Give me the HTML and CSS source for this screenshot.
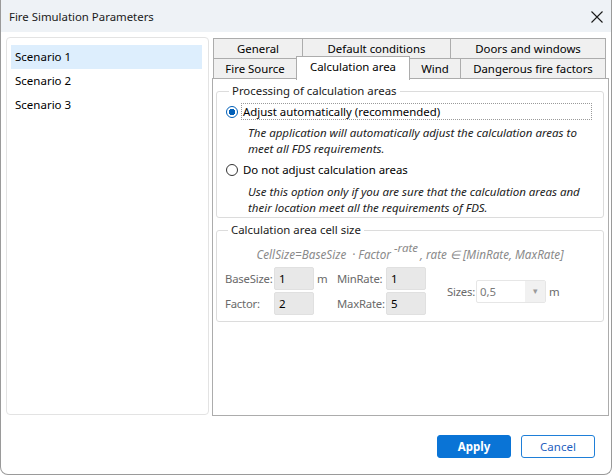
FILE: index.html
```html
<!DOCTYPE html>
<html>
<head>
<meta charset="utf-8">
<link rel="stylesheet" href="styles.css">
</head>
<body>
<div class="dialog">
  <div class="titlebar">
    <span class="title">Fire Simulation Parameters</span>
    <svg class="close" width="12" height="12" viewBox="0 0 12 12"><path d="M0.5 0.5 L11.5 11.5 M11.5 0.5 L0.5 11.5" stroke="#1a1a1a" stroke-width="1.1" fill="none"/></svg>
  </div>
  <div class="main">
    <ul class="scenarios">
      <li class="sel">Scenario 1</li>
      <li>Scenario 2</li>
      <li>Scenario 3</li>
    </ul>
    <div class="tabctl">
      <div class="tabrow">
        <div class="tab t-gen">General</div>
        <div class="tab t-def">Default conditions</div>
        <div class="tab t-door">Doors and windows</div>
      </div>
      <div class="tabrow row2">
        <div class="tab t-fire">Fire Source</div>
        <div class="tab t-calc active">Calculation area</div>
        <div class="tab t-wind">Wind</div>
        <div class="tab t-dang">Dangerous fire factors</div>
      </div>
      <div class="panel">
        <fieldset class="group g1">
          <legend>Processing of calculation areas</legend>
          <div class="radio-row">
            <span class="radio checked"></span>
            <span class="radio-label focus">Adjust automatically (recommended)</span>
          </div>
          <p class="desc">The application will automatically adjust the calculation areas to meet all FDS requirements.</p>
          <div class="radio-row r2">
            <span class="radio"></span>
            <span class="radio-label">Do not adjust calculation areas</span>
          </div>
          <p class="desc d2">Use this option only if you are sure that the calculation areas and their location meet all the requirements of FDS.</p>
        </fieldset>
        <fieldset class="group g2">
          <legend>Calculation area cell size</legend>
          <div class="formula">CellSize=BaseSize &nbsp;· Factor <sup>-rate</sup>, rate ∈ [MinRate, MaxRate]</div>
          <div class="cellgrid">
            <span class="lbl">BaseSize:</span>
            <span class="inp">1</span>
            <span class="unit">m</span>
            <span class="lbl">MinRate:</span>
            <span class="inp">1</span>
            <span></span>
            <div class="sizes">
              <span class="lbl">Sizes:</span>
              <span class="combo"><span class="combo-val">0,5</span><span class="combo-arrow">▾</span></span>
              <span class="unit u2">m</span>
            </div>
            <span class="lbl">Factor:</span>
            <span class="inp">2</span>
            <span></span>
            <span class="lbl">MaxRate:</span>
            <span class="inp">5</span>
            <span></span>
          </div>
        </fieldset>
      </div>
    </div>
  </div>
  <div class="buttons">
    <button class="btn primary">Apply</button>
    <button class="btn secondary">Cancel</button>
  </div>
</div>
</body>
</html>
```

FILE: styles.css
```css
html, body {
  margin: 0;
  padding: 0;
  background: #ffffff;
}
body {
  font-family: "Noto Sans", "Open Sans", sans-serif;
  font-size: 11.3px;
  color: #000;
}
.dialog {
  box-sizing: border-box;
  width: 612px;
  height: 475px;
  border: 1px solid #9a9a9a;
  border-top: none;
  border-radius: 0 0 8px 8px;
  background: #fff;
  overflow: hidden;
}
.titlebar {
  height: 32px;
  background: #eef2f6;
  display: flex;
  align-items: center;
  justify-content: space-between;
  padding: 0 8px 0 8px;
}
.title {
  font-size: 11.4px;
  color: #1a1a1a;
}
.close {
  display: block;
  margin-top: 1px;
}
.main {
  display: flex;
  padding: 5px 0 0 5px;
}
.scenarios {
  list-style: none;
  margin: 0;
  box-sizing: border-box;
  width: 203px;
  height: 378px;
  border: 1px solid #e3e3e3;
  border-radius: 4px;
  padding: 7px 6px 0 4px;
}
.scenarios li {
  height: 24px;
  line-height: 24px;
  padding-left: 4px;
  font-size: 11.5px;
}
.scenarios li.sel {
  background: #ddeefd;
}
.tabctl {
  margin-left: 3px;
  margin-top: 1px;
  width: 397px;
}
.tabrow {
  display: flex;
  height: 21px;
  margin-left: 1px;
}
.row2 {
  margin-top: -1px;
}
.tab {
  box-sizing: border-box;
  height: 21px;
  border: 1px solid #acacac;
  background: #f0f0f0;
  text-align: center;
  line-height: 19px;
  font-size: 11.4px;
  margin-left: -1px;
  white-space: nowrap;
}
.tab:first-child {
  margin-left: 0;
}
.t-gen { width: 90px; }
.t-def { width: 149px; }
.t-door { width: 156px; }
.t-fire { width: 84px; }
.t-calc { width: 114px; }
.t-wind { width: 52px; }
.t-dang { width: 146px; }
.tab.active {
  background: #fff;
  height: 24px;
  margin-top: -2px;
  border-bottom: none;
  line-height: 19px;
  position: relative;
  z-index: 1;
}
.panel {
  box-sizing: border-box;
  margin-top: -1px;
  height: 338px;
  border: 1px solid #acacac;
  background: #fff;
  padding: 0 4px 0 3px;
}
.group {
  margin: 5px 0 0 0;
  padding: 0;
  border: 1px solid #dcdcdc;
  border-radius: 3px;
  min-width: 0;
}
.group legend {
  margin-left: 3px;
  padding: 0 3px;
  line-height: 14px;
  font-size: 11.4px;
  color: #1a1a1a;
}
.g1 {
  padding: 5px 11px 1px 9px;
}
.radio-row {
  display: flex;
  align-items: center;
  height: 17px;
}
.r2 {
  margin-top: 4px;
}
.radio {
  box-sizing: border-box;
  width: 12px;
  height: 12px;
  border: 1px solid #333;
  border-radius: 50%;
  flex: none;
  background: #fff;
}
.radio.checked {
  border-color: #005fb8;
  background: radial-gradient(circle, #005fb8 0 3px, #fff 3.5px);
}
.radio-label {
  box-sizing: border-box;
  margin-left: 3px;
  height: 17px;
  line-height: 15px;
  padding-left: 1px;
  flex: 1;
  font-size: 11.4px;
  border: 1px solid transparent;
}
.radio-label.focus {
  border: 1px dotted #9a9a9a;
}
.desc {
  margin: 5px 0 0 22px;
  font-style: italic;
  font-size: 11.5px;
  line-height: 16px;
  color: #222;
}
.d2 {
  margin-top: 6px;
}
.g2 {
  margin-top: 5px;
  padding: 8px 8px 6px 8px;
}
.formula {
  text-align: center;
  font-style: italic;
  font-size: 11.7px;
  color: #8a8a8a;
  height: 18px;
  line-height: 18px;
}
.formula sup {
  font-size: 11.5px;
  line-height: 0;
  vertical-align: 7px;
  margin-right: 2px;
}
.cellgrid {
  margin-top: 4px;
  display: grid;
  grid-template-columns: 49px 40px 23px 49px 40px 21px auto;
  grid-template-rows: 23px 23px;
  row-gap: 2px;
  align-items: center;
}
.lbl {
  color: #6a6a6a;
  font-size: 11.3px;
  white-space: nowrap;
  letter-spacing: -0.2px;
}
.unit {
  color: #6a6a6a;
  font-size: 11.4px;
  padding-left: 3px;
}
.inp {
  box-sizing: border-box;
  height: 23px;
  background: #e8e8e8;
  border: 1px solid #e0e0e0;
  border-radius: 2px;
  line-height: 21px;
  padding-left: 4px;
  font-size: 11.5px;
}
.sizes {
  grid-column: 7;
  grid-row: 1 / span 2;
  display: flex;
  align-items: center;
}
.combo {
  box-sizing: border-box;
  display: flex;
  margin-left: 1px;
  width: 70px;
  height: 23px;
  border: 1px solid #e6e6e6;
  border-radius: 2px;
  background: #fff;
}
.combo-val {
  flex: 1;
  line-height: 21px;
  padding-left: 3px;
  color: #7a7a7a;
  font-size: 11.4px;
}
.combo-arrow {
  width: 20px;
  background: #f1f1f1;
  color: #9a9a9a;
  text-align: center;
  line-height: 19px;
  font-size: 9px;
}
.u2 {
  padding-left: 3px;
}
.buttons {
  display: flex;
  justify-content: flex-end;
  gap: 10px;
  margin-top: 19px;
  padding-right: 16px;
}
.btn {
  box-sizing: border-box;
  width: 74px;
  height: 23px;
  border-radius: 3px;
  font-family: "Noto Sans", "Open Sans", sans-serif;
  font-size: 11.5px;
  padding: 0;
}
.primary {
  background: #0a74d6;
  border: 1px solid #0a74d6;
  color: #fff;
  font-weight: bold;
}
.secondary {
  background: #fff;
  border: 1px solid #1f7fd8;
  color: #1f5fc0;
}
```
